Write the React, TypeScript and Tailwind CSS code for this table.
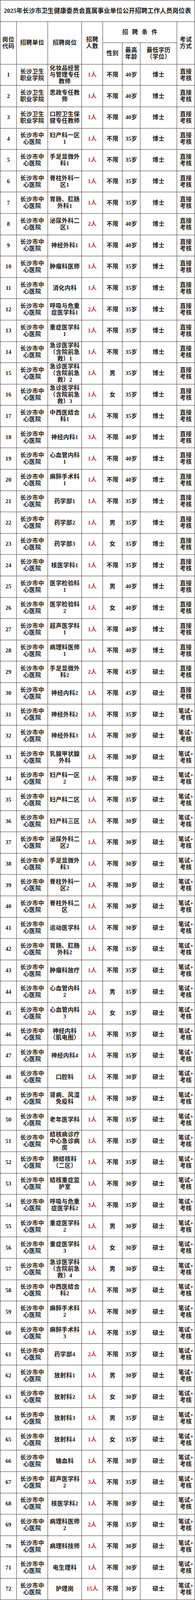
import React from "react";

// 岗位 | 人数 | 性别 | 最高年龄  ("|" inside the post name = line break)
const DATA = `化妆品经营|与管理专任|教师,1,不限,40
思政专任教|师,1,不限,40
口腔卫生保|健专任教师,1,不限,40
妇产科一区|1,1,不限,35
手足显微外|科1,1,不限,35
脊柱外科一|区1,1,不限,35
胃肠、肛肠|外科1,1,不限,35
泌尿外科二|区1,2,不限,40
神经外科1,1,不限,40
肿瘤科医师,1,不限,35
消化内科,1,不限,35
呼吸与危重|症医学科1,2,不限,35
重症医学科|1,1,不限,35
急诊医学科|（含院前急|救）1,1,不限,35
急诊医学科|（含院前急|救）2,1,男,35
急诊医学科|（含院前急|救）3,1,女,35
中西医结合|科1,1,不限,35
神经内科1,3,不限,40
心血管内科|1,1,不限,40
麻醉手术科|1,1,不限,40
药学部1,1,不限,35
药学部2,1,男,35
药学部3,1,女,35
核医学科1,1,不限,35
医学检验科|1,1,男,40
医学检验科|2,1,女,40
超声医学科|1,1,不限,40
病理科医师|1,1,不限,40
手足显微外|科2,2,不限,45
神经内科2,1,不限,45
神经外科2,1,不限,35
神经外科3,1,不限,30
乳腺甲状腺|外科,1,不限,30
妇产科一区|2,1,不限,30
妇产科二区,1,不限,35
妇产科三区,1,不限,30
泌尿外科二|区2,1,不限,30
手足显微外|科3,1,不限,30
脊柱外科一|区2,1,不限,30
脊柱外科二|区,1,不限,30
运动医学科,1,不限,30
胃肠、肛肠|外科2,1,不限,35
肿瘤科放疗,1,不限,35
心血管内科|2,2,男,35
心血管内科|3,2,女,35
神经内科|（肌电图）,1,不限,35
神经内科4,1,不限,35
口腔科,1,不限,30
肾病、风湿|免疫科,1,不限,30
老年医学科,1,不限,35
结核病诊疗|中心急诊病|房,1,不限,35
肺结核科|（二区）,1,不限,35
结核重症监|护室,1,不限,30
呼吸与危重|症医学科2,3,不限,35
重症医学科|2,1,男,30
重症医学科|3,1,女,30
急诊医学科|（含院前急|救）4,3,男,30
中西医结合|科2,1,不限,30
麻醉手术科|2,3,不限,30
麻醉手术科|3,1,不限,35
药学部4,2,不限,35
放射科1,1,男,30
放射科2,1,女,30
放射科3,1,男,35
放射科4,1,女,35
输血科,1,不限,30
超声医学科|2,3,不限,35
核医学科2,1,不限,30
病理科医师|2,2,不限,35
病理科技师,1,不限,30
电生理科,1,不限,30
护理岗,15,不限,30`;

const rows = DATA.split("\n").map((line, i) => {
  const [post, count, sex, age] = line.split(",");
  const n = i + 1;
  return {
    n,
    unit: n <= 3 ? ["长沙卫生", "职业学院"] : ["长沙市中", "心医院"],
    post: post.split("|"),
    count,
    sex,
    age,
    degree: n <= 28 ? "博士" : "硕士",
    exam: n <= 30 ? ["直接", "考核"] : ["笔试+", "考核"],
  };
});

const cell =
  "bg-white flex flex-col items-center justify-center text-center overflow-hidden text-[15px] leading-[17px]";
const head = `${cell} row-span-2 font-bold tracking-[0.4px]`;

function Lines({ lines }: { lines: string[] }) {
  return (
    <>
      {lines.map((l, i) => (
        <span key={i} className="block whitespace-nowrap">
          {l}
        </span>
      ))}
    </>
  );
}

export default function App() {
  return (
    <div className="w-[500px] bg-white text-[#1a1a1a] [font-family:'Liberation_Serif','Noto_Sans_CJK_SC',serif]">
      <div className="grid w-[500px] grid-cols-[41px_79px_86px_53px_49px_45px_93px_45px] auto-rows-[53.6px] gap-px bg-[#3a3a3a] p-px">
        {/* title */}
        <div className={`${cell} col-span-8 !text-[16px] font-bold`}>
          2025年长沙市卫生健康委员会直属事业单位公开招聘工作人员岗位表
        </div>

        {/* header */}
        <div className={head}>
          <Lines lines={["岗位", "代码"]} />
        </div>
        <div className={head}>招聘单位</div>
        <div className={head}>招聘岗位</div>
        <div className={head}>
          <Lines lines={["招聘", "人数"]} />
        </div>
        <div className={`${cell} col-span-3 font-bold tracking-[10px] pl-[10px]`}>招聘条件</div>
        <div className={head}>
          <Lines lines={["考试", "方式"]} />
        </div>
        <div className={`${cell} font-bold tracking-[0.4px]`}>性别</div>
        <div className={`${cell} font-bold tracking-[0.4px]`}>
          <Lines lines={["最高", "年龄"]} />
        </div>
        <div className={`${cell} font-bold tracking-[0.4px]`}>
          <Lines lines={["最低学历", "（学位）"]} />
        </div>

        {/* body */}
        {rows.map((r) => (
          <React.Fragment key={r.n}>
            <div className={`${cell} font-semibold`}>{r.n}</div>
            <div className={`${cell} font-semibold tracking-[0.4px]`}>
              <Lines lines={r.unit} />
            </div>
            <div className={`${cell} font-semibold tracking-[0.4px]`}>
              <Lines lines={r.post} />
            </div>
            <div className={`${cell} font-semibold text-[#d42323]`}>{r.count}人</div>
            <div className={`${cell} font-semibold tracking-[0.4px]`}>{r.sex}</div>
            <div className={`${cell} font-semibold`}>{r.age}岁</div>
            <div className={`${cell} font-semibold tracking-[0.4px]`}>{r.degree}</div>
            <div className={`${cell} font-semibold tracking-[0.2px]`}>
              <Lines lines={r.exam} />
            </div>
          </React.Fragment>
        ))}
      </div>
    </div>
  );
}
